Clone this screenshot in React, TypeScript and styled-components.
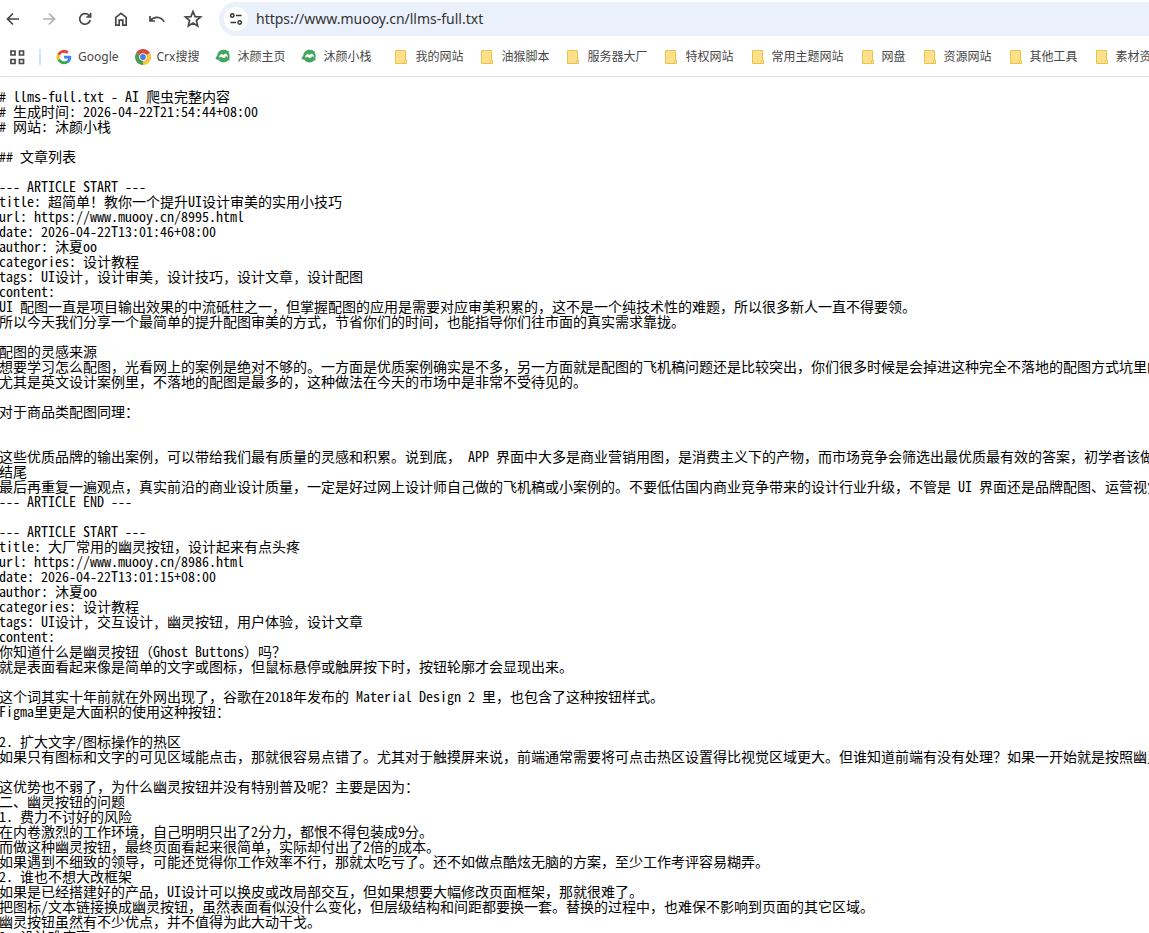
import React from "react";
import styled, { createGlobalStyle } from "styled-components";

const GlobalStyle = createGlobalStyle`
  * { box-sizing: border-box; }
  html, body { margin: 0; background: #fff; }
`;

const Shell = styled.div`
  display: flex;
  flex-direction: column;
  height: 100vh;
  overflow: hidden;
`;

const Chrome = styled.header`
  flex: none;
  border-bottom: 1px solid #dfe1e3;
  font-family: "Noto Sans", "Noto Sans CJK SC", sans-serif;
  color: #474747;
`;

const NavBar = styled.nav`
  display: flex;
  align-items: center;
  height: 38px;
`;

const NavButtons = styled.div`
  display: flex;
  width: 219px;
  padding-left: 4px;
  gap: 18px;
`;

const IconButton = styled.button<{ $muted?: boolean }>`
  display: flex;
  flex: none;
  align-items: center;
  justify-content: center;
  width: 18px;
  height: 18px;
  padding: 0;
  border: 0;
  background: none;
  color: ${(p) => (p.$muted ? "#b0b0b0" : "#474747")};

  svg {
    flex: none;
  }
`;

const AddressBar = styled.div`
  display: flex;
  flex: 1;
  align-items: center;
  gap: 8px;
  height: 34px;
  padding-left: 5px;
  border-radius: 17px 0 0 17px;
  background: #eaf1fb;
`;

const SiteInfo = styled.button`
  display: flex;
  flex: none;
  align-items: center;
  justify-content: center;
  width: 24px;
  height: 24px;
  padding: 0;
  border: 0;
  border-radius: 50%;
  background: #fff;
  color: #333;
`;

const AddressInput = styled.input`
  flex: 1;
  min-width: 0;
  padding: 0;
  border: 0;
  outline: 0;
  background: none;
  color: #333;
  font-family: "Noto Sans", sans-serif;
  font-size: 14px;
  line-height: 20px;
`;

const BookmarkBar = styled.nav`
  display: flex;
  align-items: center;
  height: 38px;
  padding-left: 8px;
  overflow: hidden;
`;

const Divider = styled.span`
  flex: none;
  width: 2px;
  height: 16px;
  margin: 0 15px 0 13px;
  background: #d3e3fd;
`;

const BookmarkGroups = styled.div`
  display: flex;
  gap: 22px;
`;

const BookmarkList = styled.div`
  display: flex;
  gap: 16px;
`;

const Bookmark = styled.a`
  display: flex;
  flex: none;
  align-items: center;
  gap: 6px;
  color: #474747;
  font-size: 12px;
  line-height: 18px;
  text-decoration: none;
  white-space: nowrap;
`;

const Document = styled.main`
  flex: 1;
  min-height: 0;
  padding-top: 12px;
  overflow: hidden;
`;

const PlainText = styled.pre`
  margin: 0 0 0 -1px;
  color: #000;
  font-family: "Noto Sans CJK SC", monospace;
  font-size: 14px;
  line-height: 15px;
  text-spacing-trim: space-all;
  white-space: pre;
`;

/* Latin runs take half of a Chinese character's width */
const HalfWidth = styled.span`
  font-feature-settings: "hwid";
`;

const stroke = { fill: "none", stroke: "currentColor", strokeWidth: 1.7 };

const BackIcon = () => (
  <svg width="18" height="18" viewBox="0 0 18 18" {...stroke}><path d="M15 9H4M9 3.500 3.500 9 9 14.500" /></svg>
);
const ForwardIcon = () => (
  <svg width="18" height="18" viewBox="0 0 18 18" {...stroke}><path d="M3 9h11M9 3.500 14.500 9 9 14.500" /></svg>
);
const ReloadIcon = () => (
  <svg width="18" height="18" viewBox="0 0 18 18" {...stroke}><path d="M14.200 10A5.300 5.300 0 1 1 12.800 5.200L14.300 6.700M14.600 2.800V7H10.300" /></svg>
);
const HomeIcon = () => (
  <svg width="18" height="18" viewBox="0 0 18 18" {...stroke}><path d="M3.800 7.300 9 3.300l5.200 4v7.900h-3.400v-5H7.200v5H3.800z" /></svg>
);
const UndoIcon = () => (
  <svg width="18" height="18" viewBox="0 0 18 18" {...stroke}><path d="M2 6v5h5M2.300 10.600C6 6 13 6 16.200 11.800" /></svg>
);
const StarIcon = () => (
  <svg width="20" height="20" viewBox="0 0 20 20" {...stroke}><path d="m10 2.500 2.100 5.100 5.500.4-4.200 3.600 1.300 5.400-4.700-2.900L5.300 17l1.300-5.400L2.400 8l5.500-.4z" /></svg>
);
const TuneIcon = () => (
  <svg width="14" height="14" viewBox="0 0 14 14" fill="none" stroke="currentColor" strokeWidth="1.500">
    <circle cx="3.300" cy="3.500" r="1.700" /><path d="M7 3.500h5.500M1.500 10.500H7" /><circle cx="10.700" cy="10.500" r="1.700" />
  </svg>
);
const AppsIcon = () => (
  <svg width="16" height="16" viewBox="0 0 16 16" {...stroke}>
    <path d="M2 2h4v4H2zM10.500 2h4v4h-4zM2 10.500h4v4H2zM10.500 10.500h4v4h-4z" />
  </svg>
);
const GoogleIcon = () => (
  <svg width="16" height="16" viewBox="2 2 44 44">
    <path fill="#4285F4" d="M43.600 20.500H24v7.700h11.200c-.6 3-2.300 5.300-4.700 6.800l6.500 5.300c4-3.700 6.900-9.300 6.900-16.300 0-1.200-.1-2.400-.3-3.500z" />
    <path fill="#34A853" d="M24 44c5.300 0 9.700-1.700 13-4.700L30.500 34c-1.700 1.200-4 2-6.500 2-5.200 0-9.600-3.300-11.300-8l-6.600 5.100C9.400 39.600 16.200 44 24 44z" />
    <path fill="#FBBC05" d="M12.700 28a12 12 0 0 1 0-8l-6.600-5.100a20 20 0 0 0 0 18.200z" />
    <path fill="#EA4335" d="M24 12c3 0 5.500 1 7.600 3l5.700-5.700A20 20 0 0 0 6.100 14.900L12.700 20c1.700-4.700 6.100-8 11.300-8z" />
  </svg>
);
const CrxIcon = () => (
  <svg width="16" height="16" viewBox="0 0 16 16">
    <path fill="#d64b3c" d="M8 8 1.100 4A8 8 0 0 1 15 4z" />
    <path fill="#4a9b55" d="M8 8v8A8 8 0 0 1 1.100 4z" />
    <path fill="#f2c744" d="M8 8l7-4a8 8 0 0 1-7 12z" />
    <circle cx="8" cy="8" r="3.800" fill="#fff" /><circle cx="8" cy="8" r="2.900" fill="#4a80d8" />
  </svg>
);
const MuyanIcon = () => (
  <svg width="16" height="16" viewBox="0 0 16 16">
    <path fill="#45a663" d="M2.300 7C2.300 3.300 5 .8 8.500.8c2 0 3.300.5 4.200 1.300l1.300-.2-.4 1.800c.8 1.100 1.100 2.200 1.100 3.500 0 1-.1 1.700-.5 2.500l.8 1.500-2 .3c-1.200 1.300-2.700 2-4.500 2-2.300 0-4-1-5.200-2.700L1 10.300c-.6-.6-.4-2 .3-2.600z" />
    <path fill="#fff" d="M4.500 9.300C4 6.800 4.700 5.500 6.200 5.200 7 5 7.800 5.400 8.300 6c.7-1 1.800-1.400 2.800-1.100 1.400.4 2 1.700 1.500 3.500-.7-1.300-1.700-1.400-2.300-.2-.5 1-2.700 1-3.200.1-.7-1-1.900-.6-2.600 1z" />
  </svg>
);
const FolderIcon = () => (
  <svg width="16" height="16" viewBox="0 0 16 16">
    <path fill="#ffe08a" stroke="#e9c34f" d="M2.500 1.500h10v9.500h1v3.500h-11z" />
    <path fill="#fff0b8" stroke="#e9c34f" d="M11.500 14.500v-2.500l1-1 1 1v2.500z" />
  </svg>
);

const sites = [
  { label: "Google", Icon: GoogleIcon },
  { label: "Crx搜搜", Icon: CrxIcon },
  { label: "沐颜主页", Icon: MuyanIcon },
  { label: "沐颜小栈", Icon: MuyanIcon },
];

const folders = [
  "我的网站",
  "油猴脚本",
  "服务器大厂",
  "特权网站",
  "常用主题网站",
  "网盘",
  "资源网站",
  "其他工具",
  "素材资源",
].map((label) => ({ label, Icon: FolderIcon }));

const text = `# llms-full.txt - AI 爬虫完整内容
# 生成时间: 2026-04-22T21:54:44+08:00
# 网站: 沐颜小栈

## 文章列表

--- ARTICLE START ---
title: 超简单！教你一个提升UI设计审美的实用小技巧
url: https://www.muooy.cn/8995.html
date: 2026-04-22T13:01:46+08:00
author: 沐夏oo
categories: 设计教程
tags: UI设计, 设计审美, 设计技巧, 设计文章, 设计配图
content:
UI 配图一直是项目输出效果的中流砥柱之一，但掌握配图的应用是需要对应审美积累的，这不是一个纯技术性的难题，所以很多新人一直不得要领。
所以今天我们分享一个最简单的提升配图审美的方式，节省你们的时间，也能指导你们往市面的真实需求靠拢。

配图的灵感来源
想要学习怎么配图，光看网上的案例是绝对不够的。一方面是优质案例确实是不多，另一方面就是配图的飞机稿问题还是比较突出，你们很多时候是会掉进这种完全不落地的配图方式坑里的
尤其是英文设计案例里，不落地的配图是最多的，这种做法在今天的市场中是非常不受待见的。

对于商品类配图同理：


这些优质品牌的输出案例，可以带给我们最有质量的灵感和积累。说到底， APP 界面中大多是商业营销用图，是消费主义下的产物，而市场竞争会筛选出最优质最有效的答案，初学者该做
结尾
最后再重复一遍观点，真实前沿的商业设计质量，一定是好过网上设计师自己做的飞机稿或小案例的。不要低估国内商业竞争带来的设计行业升级，不管是 UI 界面还是品牌配图、运营视觉
--- ARTICLE END ---

--- ARTICLE START ---
title: 大厂常用的幽灵按钮，设计起来有点头疼
url: https://www.muooy.cn/8986.html
date: 2026-04-22T13:01:15+08:00
author: 沐夏oo
categories: 设计教程
tags: UI设计, 交互设计, 幽灵按钮, 用户体验, 设计文章
content:
你知道什么是幽灵按钮（Ghost Buttons）吗？
就是表面看起来像是简单的文字或图标，但鼠标悬停或触屏按下时，按钮轮廓才会显现出来。

这个词其实十年前就在外网出现了，谷歌在2018年发布的 Material Design 2 里，也包含了这种按钮样式。
Figma里更是大面积的使用这种按钮：

2. 扩大文字/图标操作的热区
如果只有图标和文字的可见区域能点击，那就很容易点错了。尤其对于触摸屏来说，前端通常需要将可点击热区设置得比视觉区域更大。但谁知道前端有没有处理？如果一开始就是按照幽灵

这优势也不弱了，为什么幽灵按钮并没有特别普及呢？主要是因为：
二、幽灵按钮的问题
1. 费力不讨好的风险
在内卷激烈的工作环境，自己明明只出了2分力，都恨不得包装成9分。
而做这种幽灵按钮，最终页面看起来很简单，实际却付出了2倍的成本。
如果遇到不细致的领导，可能还觉得你工作效率不行，那就太吃亏了。还不如做点酷炫无脑的方案，至少工作考评容易糊弄。
2. 谁也不想大改框架
如果是已经搭建好的产品，UI设计可以换皮或改局部交互，但如果想要大幅修改页面框架，那就很难了。
把图标/文本链接换成幽灵按钮，虽然表面看似没什么变化，但层级结构和间距都要换一套。替换的过程中，也难保不影响到页面的其它区域。
幽灵按钮虽然有不少优点，并不值得为此大动干戈。
3. 设计难度高`;

const runs = text.split(/([\x20-\x7e]+)/);

const Bookmarks = ({ items }: { items: typeof sites }) => (
  <BookmarkList>
    {items.map(({ label, Icon }) => (
      <Bookmark key={label} href="#">
        <Icon />
        {label}
      </Bookmark>
    ))}
  </BookmarkList>
);

export default function App() {
  return (
    <Shell>
      <GlobalStyle />
      <Chrome>
        <NavBar aria-label="导航">
          <NavButtons>
            <IconButton aria-label="后退"><BackIcon /></IconButton>
            <IconButton aria-label="前进" $muted><ForwardIcon /></IconButton>
            <IconButton aria-label="重新加载"><ReloadIcon /></IconButton>
            <IconButton aria-label="主页"><HomeIcon /></IconButton>
            <IconButton aria-label="撤销"><UndoIcon /></IconButton>
            <IconButton aria-label="收藏"><StarIcon /></IconButton>
          </NavButtons>
          <AddressBar>
            <SiteInfo aria-label="网站信息"><TuneIcon /></SiteInfo>
            <AddressInput aria-label="地址" defaultValue="https://www.muooy.cn/llms-full.txt" />
          </AddressBar>
        </NavBar>
        <BookmarkBar aria-label="书签">
          <IconButton aria-label="应用"><AppsIcon /></IconButton>
          <Divider />
          <BookmarkGroups>
            <Bookmarks items={sites} />
            <Bookmarks items={folders} />
          </BookmarkGroups>
        </BookmarkBar>
      </Chrome>
      <Document>
        <PlainText>
          {runs.map((run, i) => (i % 2 ? <HalfWidth key={i}>{run}</HalfWidth> : run))}
        </PlainText>
      </Document>
    </Shell>
  );
}
